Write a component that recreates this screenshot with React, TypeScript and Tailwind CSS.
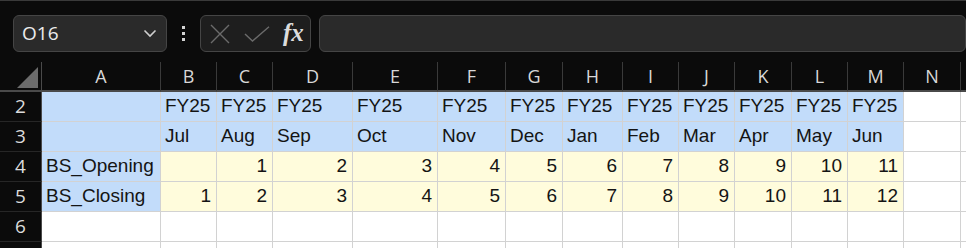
import React from 'react';

const cols = ['A', 'B', 'C', 'D', 'E', 'F', 'G', 'H', 'I', 'J', 'K', 'L', 'M', 'N'];
const months = ['Jul', 'Aug', 'Sep', 'Oct', 'Nov', 'Dec', 'Jan', 'Feb', 'Mar', 'Apr', 'May', 'Jun'];

type Cell = { text?: string; fill: 'blue' | 'yellow' | 'white'; align?: 'left' | 'right' };

function buildRows(): { num: string; cells: Cell[] }[] {
  const white = (): Cell => ({ fill: 'white' });
  const r2: Cell[] = [{ fill: 'blue' }, ...months.map(() => ({ text: 'FY25', fill: 'blue' as const })), white(), white()];
  const r3: Cell[] = [{ fill: 'blue' }, ...months.map((m) => ({ text: m, fill: 'blue' as const })), white(), white()];
  const r4: Cell[] = [
    { text: 'BS_Opening', fill: 'blue' },
    ...months.map((_, i) => ({ text: i === 0 ? '' : String(i), fill: 'yellow' as const, align: 'right' as const })),
    white(),
    white(),
  ];
  const r5: Cell[] = [
    { text: 'BS_Closing', fill: 'blue' },
    ...months.map((_, i) => ({ text: String(i + 1), fill: 'yellow' as const, align: 'right' as const })),
    white(),
    white(),
  ];
  const r6: Cell[] = Array.from({ length: 15 }, white);
  const r7: Cell[] = Array.from({ length: 15 }, white);
  return [
    { num: '2', cells: r2 },
    { num: '3', cells: r3 },
    { num: '4', cells: r4 },
    { num: '5', cells: r5 },
    { num: '6', cells: r6 },
    // row 7 only peeks in at the bottom edge, its number isn't visible
    { num: '', cells: r7 },
  ];
}

const fillClass = {
  blue: 'bg-[#c2dcfa]',
  yellow: 'bg-[#fffcdc]',
  white: 'bg-white',
};

export default function App() {
  const rows = buildRows();

  return (
    <div className="w-[966px] h-[248px] overflow-hidden bg-[#0b0b0b] border-t border-[#3a3a3a]">
      {/* Name box + formula bar */}
      <div className="h-[61px] flex items-start pt-[14px] pl-[13px]">
        <div className="w-[157px] h-[37px] rounded-[6px] border border-[#454545] bg-[#2a2a2a] flex items-center justify-between pl-[8px] pr-[9px]">
          <span className="text-[19px] text-[#ececec] font-['Open_Sans',sans-serif] leading-none">O16</span>
          <svg width="14" height="9" viewBox="0 0 14 9" fill="none">
            <path d="M1.5 1.5 L7 7 L12.5 1.5" stroke="#cfcfcf" strokeWidth="1.6" />
          </svg>
        </div>
        <div className="w-[33px] h-[37px] flex flex-col items-center justify-center gap-[3px]">
          <span className="w-[3px] h-[3px] bg-[#d4d4d4]" />
          <span className="w-[3px] h-[3px] bg-[#d4d4d4]" />
          <span className="w-[3px] h-[3px] bg-[#d4d4d4]" />
        </div>
        <div className="w-[113px] h-[37px] rounded-[6px] border border-[#454545] bg-[#1e1e1e] flex items-center pl-[9px] pr-[6px]">
          <svg width="20" height="20" viewBox="0 0 20 20" fill="none">
            <path d="M1 1 L19 19 M19 1 L1 19" stroke="#6b6b6b" strokeWidth="1.4" />
          </svg>
          <svg width="26" height="16" viewBox="0 0 26 16" fill="none" className="ml-[14px]">
            <path d="M1 8 L8.5 15 L25 0.8" stroke="#6b6b6b" strokeWidth="1.4" />
          </svg>
          <span className="ml-auto text-[25px] italic font-bold text-[#dcdcdc] font-['Liberation_Serif',serif] leading-none pb-[2px]">fx</span>
        </div>
        <div className="ml-[8px] w-[660px] h-[37px] rounded-[6px] border border-[#454545] bg-[#2a2a2a]" />
      </div>

      {/* Grid */}
      <div className="grid grid-cols-[42px_119px_56px_56px_80px_85px_68px_57px_60px_56px_56px_57px_56px_56px_57px_1fr]">
        {/* Column header row */}
        <div className="h-[30px] border-r border-b-2 border-[#4a4a4a] bg-[#0b0b0b] relative">
          <svg width="21" height="21" viewBox="0 0 21 21" className="absolute left-[17px] top-[5px]">
            <polygon points="21,0 21,21 0,21" fill="#6c6c6c" />
          </svg>
        </div>
        {cols.map((c) => (
          <div
            key={c}
            className="h-[30px] border-b-2 border-b-[#4a4a4a] border-r border-r-[#3a3a3a] flex items-center justify-center text-[18px] text-[#d8d8d8] font-['Open_Sans',sans-serif]"
          >
            {c}
          </div>
        ))}
        <div className="h-[30px] border-b-2 border-b-[#4a4a4a] bg-[#0b0b0b]" />

        {rows.map((row, r) => (
          <React.Fragment key={r}>
            <div className="h-[30px] bg-[#0b0b0b] border-r border-r-[#4a4a4a] border-b border-b-[#262626] flex items-center justify-center text-[19px] text-[#dcdcdc] font-['Open_Sans',sans-serif]">
              {row.num}
            </div>
            {row.cells.map((cell, i) => (
              <div
                key={i}
                className={`h-[30px] border-r border-b border-[#d2d2d2] flex items-center px-[5px] text-[19px] text-[#141414] font-['Liberation_Sans',Arial,sans-serif] whitespace-nowrap overflow-hidden ${fillClass[cell.fill]} ${
                  cell.align === 'right' ? 'justify-end' : 'justify-start pl-[4px]'
                }`}
              >
                {cell.text}
              </div>
            ))}
          </React.Fragment>
        ))}
      </div>
    </div>
  );
}
